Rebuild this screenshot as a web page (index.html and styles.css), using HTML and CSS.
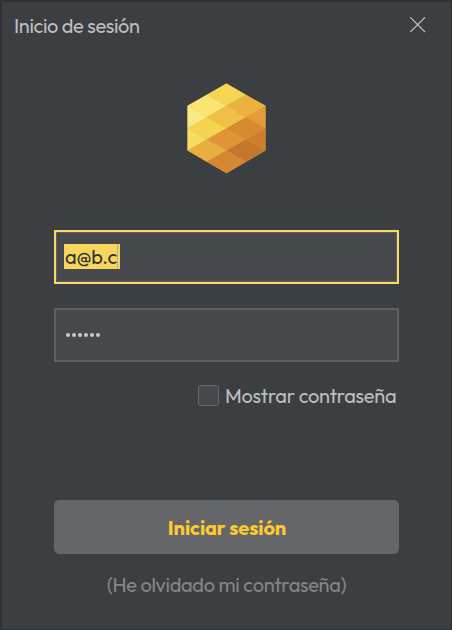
FILE: index.html
```html
<!DOCTYPE html>
<html lang="es">
<head>
<meta charset="utf-8">
<title>Inicio de sesión</title>
<link rel="stylesheet" href="styles.css">
</head>
<body>
<main class="window">
  <header class="titlebar">
    <h1 class="title">Inicio de sesión</h1>
    <button class="close" type="button" aria-label="Cerrar">
      <svg width="16" height="16" viewBox="0 0 16 16"><path d="M.3 .3 15 15M15 .3 .3 15" stroke="#c4c5c5" stroke-width="1.1" fill="none"/></svg>
    </button>
  </header>
  <form class="form">
    <svg class="logo" viewBox="21.5 20.5 237 273" preserveAspectRatio="none" aria-hidden="true">
      <path fill="#e3a33d" d="M140 22 257 89V223L140 291 23 223V89z"/>
      <path fill="#f5d552" d="M140 22 198 56 140 89 81 56z"/>
      <path fill="#fae474" d="M81 56 140 89 81 123 23 89z"/>
      <path fill="#ebb23f" d="M198 56 257 89 198 123 140 89z"/>
      <path fill="#fbeb88" d="M23 89 81 123 23 156z"/>
      <path fill="#efc045" d="M140 89 198 123 140 156 81 123z"/>
      <path fill="#f5d450" d="M81 123 140 156 81 190 23 156z"/>
      <path fill="#e39c39" d="M257 89V156L198 123z"/>
      <path fill="#d98a31" d="M198 123 257 156 198 190 140 156z"/>
      <path fill="#df9436" d="M140 156 198 190 140 223 81 190z"/>
      <path fill="#f5de62" d="M23 156 81 190 23 223z"/>
      <path fill="#e8ae3f" d="M81 190 140 223 81 257 23 223z"/>
      <path fill="#c4762d" d="M198 190 257 223 198 257 140 223z"/>
      <path fill="#cd7f2e" d="M257 156V223L198 190z"/>
      <path fill="#d68731" d="M140 223 198 257 140 291 81 257z"/>
    </svg>
    <div class="field field-active"><span class="selection">a@b.c</span></div>
    <div class="field field-password"><span class="dots"><i></i><i></i><i></i><i></i><i></i><i></i></span></div>
    <label class="show"><span class="box"></span><span class="show-text">Mostrar contraseña</span></label>
    <button class="submit" type="button">Iniciar sesión</button>
    <a class="forgot">(He olvidado mi contraseña)</a>
  </form>
</main>
</body>
</html>
```
FILE: styles.css
```css
* { box-sizing: border-box; }
body {
  margin: 0;
  font-family: Outfit, Lato, sans-serif;
  font-size: 20px;
  font-weight: 380;
  line-height: 26px;
  color: #bdbebf;
}
.window {
  width: 452px;
  height: 630px;
  background: #3c3f41;
  border: 2px solid #303234;
  border-bottom-width: 1px;
  border-right-width: 1px;
}
.titlebar {
  display: flex;
  justify-content: space-between;
  height: 48px;
  padding: 11px 25px 0 12px;
}
.title { margin: 0; font-size: 20px; font-weight: 380; letter-spacing: -0.36px; white-space: nowrap; }
.close {
  width: 16px;
  height: 16px;
  margin-top: 4px;
  padding: 0;
  border: 0;
  background: none;
}
.close svg { display: block; }
.form {
  display: flex;
  flex-direction: column;
  width: 345px;
  margin-left: 52px;
}
.logo { width: 79px; height: 91px; margin: 33px 0 56px 133px; }
.field {
  display: flex;
  align-items: center;
  height: 54px;
  padding-left: 8px;
  border: 2px solid #5e6062;
  background: #46494b;
}
.field-active { border-color: #f8da67; box-shadow: inset 0 0 0 1px #5d5f58; }
.selection {
  width: 56px;
  height: 25px;
  margin-top: -1px;
  padding-left: 1px;
  line-height: 26px;
  background: #f7d65d;
  color: #303335;
  letter-spacing: -0.2px;
  position: relative;
}
.selection::after {
  content: "";
  position: absolute;
  right: 2px;
  top: 0;
  width: 1px;
  height: 25px;
  background: #b9b58a;
}
.field-password { margin-top: 24px; padding-left: 10px; }
.dots { display: flex; gap: 2px; }
.dots i { width: 4px; height: 4px; border-radius: 50%; background: #c8c9ca; }
.show {
  display: flex;
  align-items: center;
  gap: 6px;
  height: 26px;
  margin: 21px 0 0 144px;
}
.box {
  flex: none;
  width: 21px;
  height: 21px;
  margin-top: -1px;
  border: 1.5px solid #696a6d;
  border-radius: 3px;
  background: #45494a;
}
.show-text { letter-spacing: -0.27px; white-space: nowrap; }
.submit {
  height: 54px;
  margin: 91px 0 0;
  padding: 2px 0 0 1px;
  border: 0;
  border-radius: 5px;
  background: #656669;
  color: #fdca30;
  font: 700 20px/26px Outfit, Lato, sans-serif;
  letter-spacing: -0.1px;
}
.forgot { margin-top: 18px; text-align: center; color: #858687; letter-spacing: -0.31px; white-space: nowrap; }
```
